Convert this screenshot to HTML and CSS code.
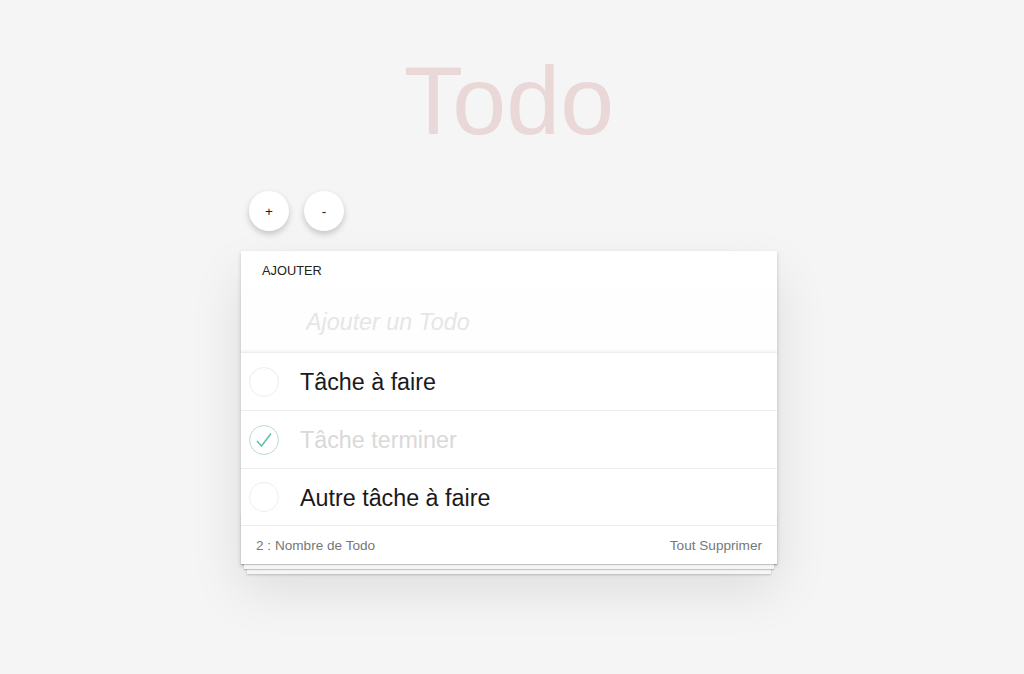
FILE: index.html
```html
<!DOCTYPE html>
<html lang="fr">
<head>
    <meta charset="UTF-8">
    <meta name="viewport" content="width=device-width, initial-scale=1.0">
    <title>Todo</title>
    <link rel="stylesheet" href="styles.css">
</head>
<body>
    <div class="app">
        <h1>Todo</h1>
        <div class="controls">
            <button class="round-btn">+</button>
            <button class="round-btn">-</button>
        </div>
        <section class="card">
            <header class="card-header">Ajouter</header>
            <input class="new-todo" type="text" placeholder="Ajouter un Todo">
            <ul class="todo-list">
                <li class="todo">
                    <span class="toggle"></span>
                    <span class="label">Tâche à faire</span>
                </li>
                <li class="todo done">
                    <span class="toggle">
                        <svg width="20" height="20" viewBox="0 0 20 20"><path d="M3 11 L7.5 16 L17 3.5" fill="none" stroke="#5dc2af" stroke-width="1.5"/></svg>
                    </span>
                    <span class="label">Tâche terminer</span>
                </li>
                <li class="todo">
                    <span class="toggle"></span>
                    <span class="label">Autre tâche à faire</span>
                </li>
            </ul>
            <footer class="card-footer">
                <span>2 : Nombre de Todo</span>
                <span>Tout Supprimer</span>
            </footer>
        </section>
    </div>
</body>
</html>
```

FILE: styles.css
```css
html {
    background-color: #f5f5f5;
}

body {
    margin: 0;
    min-height: 100vh;
    font-family: "Liberation Sans", Arial, sans-serif;
    color: #1a1a1a;
}

.app {
    width: 536px;
    margin-left: calc(50% - 271px);
}

h1 {
    margin: 41px 0 0;
    font-size: 97px;
    font-weight: 100;
    line-height: 120px;
    text-align: center;
    color: rgba(175, 47, 47, 0.15);
}

.controls {
    display: flex;
    gap: 15px;
    margin: 30px 0 20px 8px;
}

.round-btn {
    width: 40px;
    height: 40px;
    border: none;
    border-radius: 50%;
    background-color: #ffffff;
    box-shadow: 0 3px 6px rgba(0, 0, 0, 0.2);
    font-family: "Liberation Sans", Arial, sans-serif;
    font-size: 13.6px;
    color: #222;
    padding: 0;
    cursor: pointer;
}

.card {
    position: relative;
    background-color: #ffffff;
    box-shadow: 0 2px 4px rgba(0, 0, 0, 0.2), 0 25px 50px rgba(0, 0, 0, 0.1);
}

.card-header {
    padding: 12px 21px 0;
    height: 25px;
    font-size: 12.8px;
    text-transform: uppercase;
    color: #222;
}

.new-todo {
    display: block;
    width: 100%;
    box-sizing: border-box;
    height: 65px;
    margin: 0;
    padding: 5px 16px 0 65px;
    border: none;
    border-bottom: 1px solid #ededed;
    background: rgba(0, 0, 0, 0.003);
    box-shadow: inset 0 -2px 1px rgba(0, 0, 0, 0.03);
    font-family: "Liberation Sans", Arial, sans-serif;
    font-size: 23.3px;
    outline: none;
}

.new-todo::placeholder {
    font-style: italic;
    color: #e6e6e6;
}

.todo-list {
    list-style: none;
    margin: 0;
    padding: 0;
}

.todo {
    display: flex;
    align-items: center;
    height: 57px;
    border-bottom: 1px solid #ededed;
    font-size: 23.3px;
}

.todo:last-child {
    height: 56px;
}

.label {
    padding-top: 2px;
}

.toggle {
    width: 28px;
    height: 28px;
    margin: 0 21px 0 8px;
    border: 1px solid #ededed;
    border-radius: 50%;
    display: flex;
    align-items: center;
    justify-content: center;
    flex-shrink: 0;
}

.done .toggle {
    border-color: #bddad5;
}

.done .label {
    color: #d9d9d9;
}

.card-footer {
    position: relative;
    display: flex;
    justify-content: space-between;
    align-items: center;
    height: 38px;
    padding: 0 15px;
    font-size: 13.6px;
    color: #777;
}

.card-footer::before {
    content: '';
    position: absolute;
    left: 0;
    right: 0;
    bottom: 0;
    height: 50px;
    overflow: hidden;
    box-shadow: 0 1px 1px rgba(0, 0, 0, 0.2),
                0 8px 0 -3px #f6f6f6,
                0 9px 1px -3px rgba(0, 0, 0, 0.2),
                0 16px 0 -6px #f6f6f6,
                0 17px 2px -6px rgba(0, 0, 0, 0.2);
}
```
